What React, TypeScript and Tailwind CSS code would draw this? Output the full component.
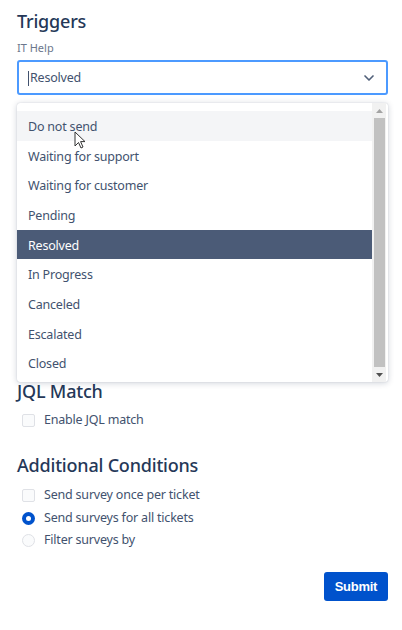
import React from 'react';
import { ChevronDown } from 'lucide-react';

const options = [
  'Do not send',
  'Waiting for support',
  'Waiting for customer',
  'Pending',
  'Resolved',
  'In Progress',
  'Canceled',
  'Escalated',
  'Closed',
];

function Checkbox({ label }: { label: string }) {
  return (
    <div className="flex items-center gap-[9px] h-[22.5px]">
      <span className="w-[13px] h-[13px] rounded-[2px] border border-[#dfe1e6] bg-[#fafbfc]" />
      <span className="text-[12.5px] tracking-[-0.2px] text-[#42526e]">{label}</span>
    </div>
  );
}

function Radio({ label, checked }: { label: string; checked?: boolean }) {
  return (
    <div className="flex items-center gap-[9px] h-[22.5px]">
      {checked ? (
        <span className="w-[13px] h-[13px] rounded-full bg-[#0052cc] flex items-center justify-center">
          <span className="w-[5px] h-[5px] rounded-full bg-white" />
        </span>
      ) : (
        <span className="w-[13px] h-[13px] rounded-full border border-[#dfe1e6] bg-[#fafbfc]" />
      )}
      <span className="text-[12.5px] tracking-[-0.2px] text-[#42526e]">{label}</span>
    </div>
  );
}

export default function App() {
  return (
    <div className="w-[402px] h-[630px] bg-white pl-[17px] pr-[14px] pt-[9px] font-['Segoe_UI','Noto_Sans',sans-serif] relative overflow-hidden">
      <h2 className="text-[18px] font-medium tracking-[-0.2px] text-[#253858] leading-[24px]">Triggers</h2>
      <div className="text-[11px] text-[#6b778c] mt-[8px] leading-[14px]">IT Help</div>

      <div className="mt-[5px] h-[35px] w-[371px] border-2 border-[#4c9aff] rounded-[3px] flex items-center justify-between pl-[9px] pr-[9px]">
        <span className="text-[12.5px] tracking-[-0.2px] text-[#42526e] flex items-center pt-[2px]">
          <span className="w-px h-[15px] bg-[#42526e] mr-px" />
          Resolved
        </span>
        <ChevronDown size={16} strokeWidth={2.5} className="text-[#505f79]" />
      </div>

      <div className="relative mt-[8px] h-[279px] w-[371px] bg-white rounded-[3px] shadow-[0_1px_6px_rgba(9,30,66,0.2),0_0_1px_rgba(9,30,66,0.25)] flex pt-[8px]">
        <ul className="flex-1 flex flex-col">
          {options.map((o, i) => (
            <li
              key={o}
              className={`h-[29.7px] flex items-center pl-[11px] pt-[3px] text-[12.5px] tracking-[-0.2px] ${
                i === 0
                  ? 'bg-[#f4f5f7] text-[#42526e]'
                  : o === 'Resolved'
                  ? 'bg-[#4b5b77] text-white'
                  : 'text-[#42526e]'
              }`}
            >
              {o}
            </li>
          ))}
        </ul>
        <div className="w-[14px] -mt-[8px] mr-[2px] bg-[#f1f1f1] flex flex-col items-center">
          <div className="h-[15px] flex items-center justify-center">
            <svg width="7" height="4" viewBox="0 0 7 4"><path d="M0 4 L3.5 0 L7 4Z" fill="#a3a3a3" /></svg>
          </div>
          <div className="flex-1 w-[11px] bg-[#c1c1c1]" />
          <div className="h-[15px] flex items-center justify-center">
            <svg width="7" height="4" viewBox="0 0 7 4"><path d="M0 0 L3.5 4 L7 0Z" fill="#505050" /></svg>
          </div>
        </div>
        <svg className="absolute left-[57px] top-[28px]" width="12" height="19" viewBox="0 0 12 19">
          <path d="M1 1 L1 15 L4.5 11.5 L7 17 L9 16 L6.6 10.6 L11 10.6 Z" fill="white" stroke="#333" strokeWidth="1" strokeLinejoin="round" />
        </svg>
      </div>

      <h2 className="text-[18px] font-medium tracking-[-0.2px] text-[#253858] leading-[24px] mt-[-3px]">JQL Match</h2>
      <div className="mt-[6px] pl-[5px]">
        <Checkbox label="Enable JQL match" />
      </div>

      <h2 className="text-[18px] font-medium tracking-[-0.2px] text-[#253858] leading-[24px] mt-[21px]">Additional Conditions</h2>
      <div className="mt-[8px] pl-[5px] flex flex-col">
        <Checkbox label="Send survey once per ticket" />
        <Radio label="Send surveys for all tickets" checked />
        <Radio label="Filter surveys by" />
      </div>

      <div className="flex justify-end mt-[20px]">
        <button className="h-[29px] px-[11px] bg-[#0052cc] text-white text-[13px] font-semibold rounded-[3px] font-['Liberation_Sans',sans-serif] tracking-[-0.3px]">
          Submit
        </button>
      </div>
    </div>
  );
}
